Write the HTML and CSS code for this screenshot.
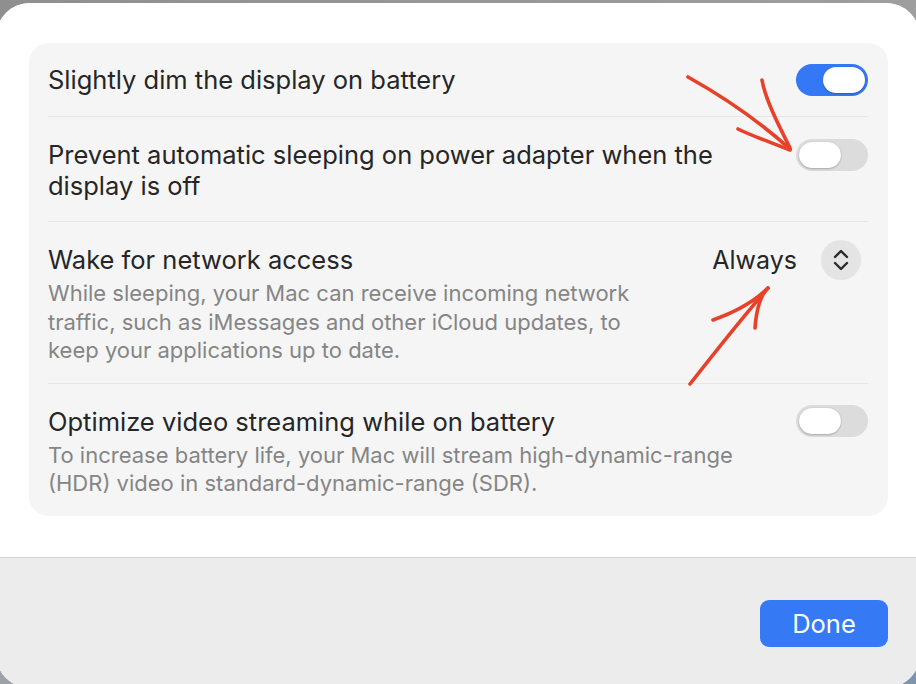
FILE: index.html
```html
<!DOCTYPE html>
<html>
<head>
<meta charset="utf-8">
<link rel="stylesheet" href="styles.css">
</head>
<body>
<div class="window">
  <div class="content">
    <div class="card">
      <div class="row">
        <div class="text"><div class="title">Slightly dim the display on battery</div></div>
        <div class="control"><span class="toggle on"><span class="knob"></span></span></div>
      </div>
      <div class="row">
        <div class="text"><div class="title">Prevent automatic sleeping on power adapter when the<br>display is off</div></div>
        <div class="control"><span class="toggle"><span class="knob"></span></span></div>
      </div>
      <div class="row desc">
        <div class="text">
          <div class="title">Wake for network access</div>
          <div class="sub">While sleeping, your Mac can receive incoming network<br>traffic, such as iMessages and other iCloud updates, to<br>keep your applications up to date.</div>
        </div>
        <div class="control">
          <span class="select">Always</span>
          <span class="stepper">
            <svg width="16" height="22" viewBox="0 0 16 22"><path d="M2 8 L8 2 L14 8 M2 14 L8 20 L14 14" fill="none" stroke="#2a2a2a" stroke-width="2.4" stroke-linecap="round" stroke-linejoin="round"/></svg>
          </span>
        </div>
      </div>
      <div class="row desc">
        <div class="text">
          <div class="title">Optimize video streaming while on battery</div>
          <div class="sub">To increase battery life, your Mac will stream high-dynamic-range<br>(HDR) video in standard-dynamic-range (SDR).</div>
        </div>
        <div class="control"><span class="toggle"><span class="knob"></span></span></div>
      </div>
    </div>
  </div>
  <div class="footer"><button class="done">Done</button></div>
</div>
<svg class="annotations" viewBox="0 0 916 684" width="916" height="684">
  <g fill="none" stroke="#e8412a" stroke-width="3.6" stroke-linecap="round" stroke-linejoin="round">
    <path d="M688 77 C 722 96, 760 122, 790 149"/>
    <path d="M762 80 C 765 98, 777 122, 790 148"/>
    <path d="M738 129 C 752 136, 770 142, 790 150"/>
    <path d="M690 384 C 715 352, 742 318, 768 288"/>
    <path d="M713 320 C 730 314, 752 304, 768 288"/>
    <path d="M755 328 C 756 314, 758 300, 766 290"/>
  </g>
</svg>
</body>
</html>
```
FILE: styles.css
```css
html, body {
  margin: 0;
  height: 100%;
  overflow: hidden;
}
body {
  background: linear-gradient(160deg, #8f8f8f 0%, #a8a8a8 55%, #7f93ad 100%);
  font-family: Inter, "Noto Sans", sans-serif;
  position: relative;
}
.window {
  margin: 3px -4px 0 -4px;
  height: 685px;
  border-radius: 34px;
  overflow: hidden;
  display: flex;
  flex-direction: column;
  background: #fff;
}
.content {
  height: 554px;
  flex-shrink: 0;
  box-sizing: border-box;
  padding: 40px 32px 0 33px;
  background: #fff;
}
.card {
  background: #f5f5f5;
  border-radius: 20px;
  padding: 0 20px 0 19px;
}
.row {
  display: flex;
  align-items: flex-start;
  justify-content: space-between;
  padding: 22px 0 20px;
  border-bottom: 1px solid #e6e6e6;
}
.row:first-child {
  padding: 21px 0 21px;
}
.row.desc {
  padding-bottom: 18px;
}
.row:last-child {
  border-bottom: none;
}
.title {
  font-size: 25.5px;
  line-height: 31px;
  color: #262626;
  white-space: nowrap;
}
.sub {
  font-size: 22px;
  line-height: 28.5px;
  color: #858585;
  margin-top: 4px;
  white-space: nowrap;
}
.control {
  height: 31px;
  display: flex;
  align-items: center;
  gap: 24px;
  flex-shrink: 0;
}
.toggle {
  width: 72px;
  height: 32px;
  border-radius: 16px;
  background: #dcdcdc;
  display: flex;
  align-items: center;
  padding: 0 3px;
  box-sizing: border-box;
}
.toggle.on {
  background: #3478f6;
  justify-content: flex-end;
}
.knob {
  width: 42px;
  height: 26px;
  border-radius: 13px;
  background: #fff;
  box-shadow: 0 1px 2px rgba(0, 0, 0, 0.22), 0 0 1px rgba(0, 0, 0, 0.18);
}
.select {
  font-size: 25px;
  color: #262626;
}
.stepper {
  width: 40px;
  height: 40px;
  border-radius: 50%;
  background: #e4e4e4;
  display: flex;
  align-items: center;
  justify-content: center;
  margin-right: 7px;
}
.footer {
  flex: 1;
  background: #ececec;
  border-top: 1px solid #d3d3d3;
  display: flex;
  justify-content: flex-end;
  align-items: flex-start;
  padding: 42px 32px 0 0;
}
.done {
  width: 128px;
  height: 47px;
  border: none;
  border-radius: 9px;
  background: #3679f5;
  color: #fff;
  font-family: Inter, "Noto Sans", sans-serif;
  font-size: 25.5px;
  padding: 0;
}
.annotations {
  position: absolute;
  left: 0;
  top: 0;
  pointer-events: none;
}
```
